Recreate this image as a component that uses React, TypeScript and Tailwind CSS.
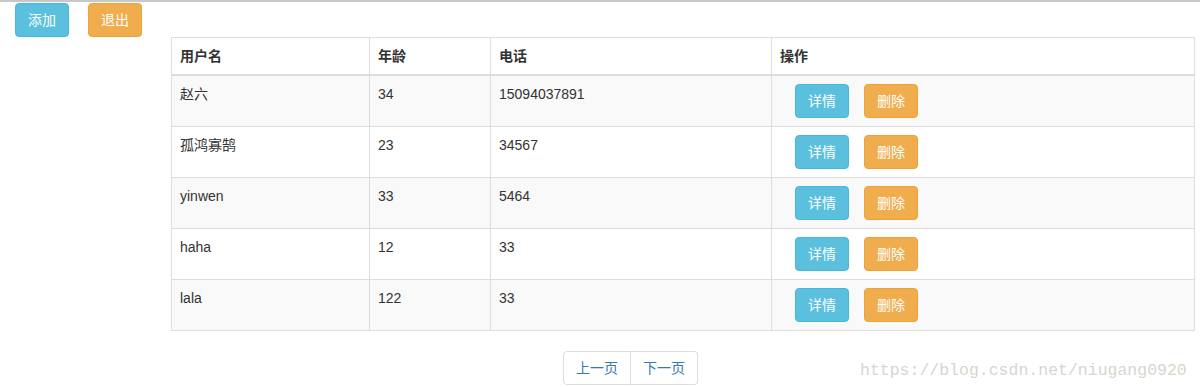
import React from 'react';

interface User {
  name: string;
  age: number;
  phone: string;
}

const users: User[] = [
  { name: '赵六', age: 34, phone: '15094037891' },
  { name: '孤鸿寡鹄', age: 23, phone: '34567' },
  { name: 'yinwen', age: 33, phone: '5464' },
  { name: 'haha', age: 12, phone: '33' },
  { name: 'lala', age: 122, phone: '33' },
];

const btnInfo =
  'inline-block h-[34px] px-[12px] rounded-[4px] border border-[#46b8da] bg-[#5bc0de] text-white text-[14px] leading-[20px]';
const btnWarn =
  'inline-block h-[34px] px-[12px] rounded-[4px] border border-[#eea236] bg-[#f0ad4e] text-white text-[14px] leading-[20px]';

const App: React.FC = () => {
  return (
    <div
      className="relative min-h-[387px] border-t-2 border-[#c8c8c8] bg-white text-[14px] leading-[20px] text-[#333]"
      style={{ fontFamily: '"Liberation Sans", Arial, "Noto Sans CJK SC", sans-serif' }}
    >
      <div className="flex pt-[1px] pl-[15px] gap-[19px]">
        <button className={btnInfo}>添加</button>
        <button className={btnWarn}>退出</button>
      </div>

      <table className="ml-[171px] w-[1024px] border-collapse border border-[#ddd]">
        <thead>
          <tr>
            <th className="w-[198px] border border-b-2 border-[#ddd] p-[8px] text-left font-bold align-bottom">用户名</th>
            <th className="w-[121px] border border-b-2 border-[#ddd] p-[8px] text-left font-bold align-bottom">年龄</th>
            <th className="w-[281px] border border-b-2 border-[#ddd] p-[8px] text-left font-bold align-bottom">电话</th>
            <th className="border border-b-2 border-[#ddd] p-[8px] text-left font-bold align-bottom">操作</th>
          </tr>
        </thead>
        <tbody>
          {users.map((u, i) => (
            <tr key={i} className={i % 2 === 0 ? 'bg-[#f9f9f9]' : 'bg-white'}>
              <td className="border border-[#ddd] p-[8px] align-top">{u.name}</td>
              <td className="border border-[#ddd] p-[8px] align-top">{u.age}</td>
              <td className="border border-[#ddd] p-[8px] align-top">{u.phone}</td>
              <td className="border border-[#ddd] p-[8px] align-top">
                <div className="flex pl-[15px] gap-[15px]">
                  <button className={btnInfo}>详情</button>
                  <button className={btnWarn}>删除</button>
                </div>
              </td>
            </tr>
          ))}
        </tbody>
      </table>

      <div className="ml-[563px] mt-[20px] flex">
        <a className="block h-[34px] px-[12px] py-[6px] border border-[#ddd] rounded-l-[4px] text-[#337ab7] bg-white">上一页</a>
        <a className="block h-[34px] px-[12px] py-[6px] border border-l-0 border-[#ddd] rounded-r-[4px] text-[#337ab7] bg-white">下一页</a>
      </div>

      <div
        className="absolute left-[860px] top-[359px] text-[16.5px] leading-[20px] text-[#d6d6ce]"
        style={{ fontFamily: '"Liberation Mono", "DejaVu Sans Mono", monospace' }}
      >
        https://blog.csdn.net/niugang0920
      </div>
    </div>
  );
};

export default App;
